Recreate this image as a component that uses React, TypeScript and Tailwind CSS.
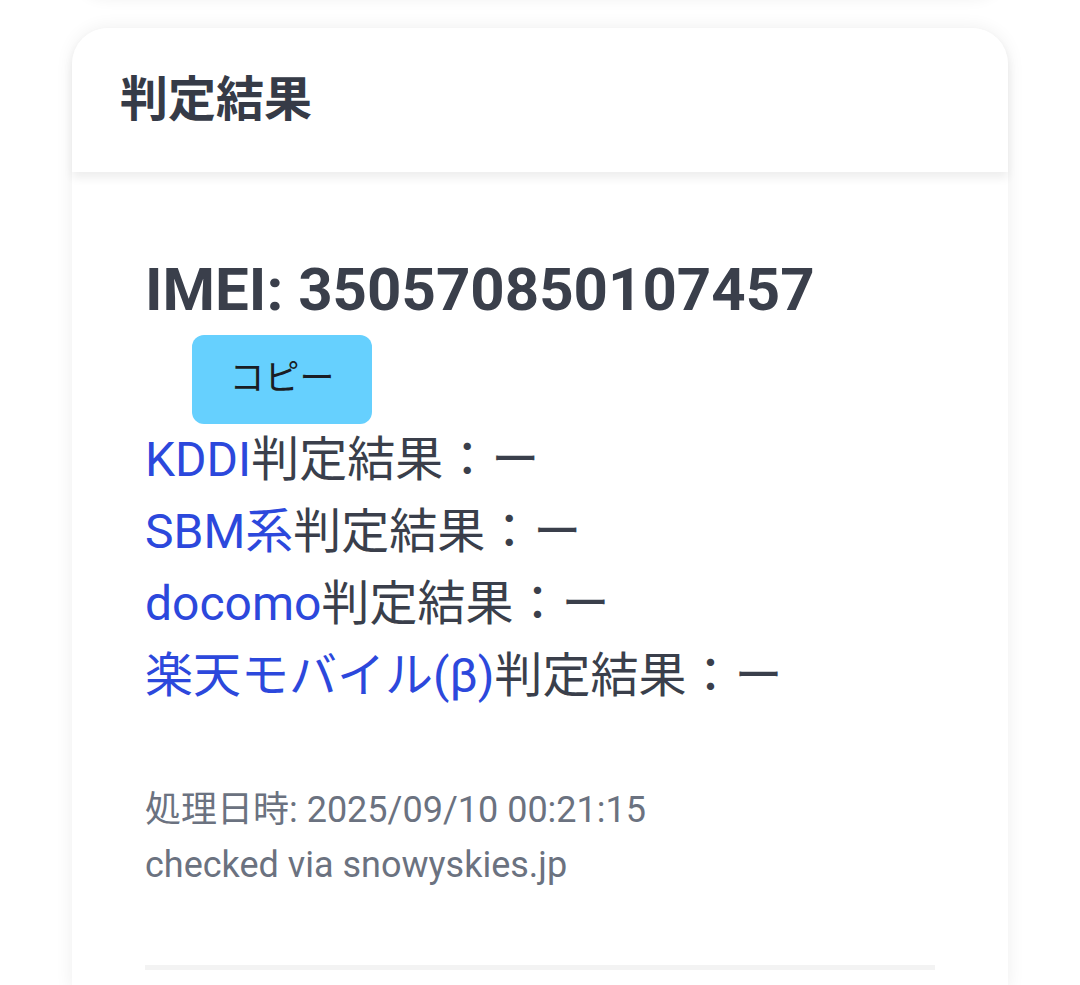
import React from 'react';

const font = { fontFamily: 'Roboto, "Noto Sans CJK JP", sans-serif' };

const carriers = ['KDDI', 'SBM系', 'docomo', '楽天モバイル(β)'];

export default function App() {
  return (
    <div className="min-h-screen bg-white overflow-hidden" style={font}>
      {/* previous card, only its bottom edge is visible */}
      <div className="mx-[72px] -mt-[40px] h-[36px] rounded-b-[36px] bg-white shadow-[0_4px_14px_rgba(0,0,0,0.05)]" />

      <div className="mx-[72px] mt-[32px] rounded-t-[36px] bg-white shadow-[0_0_18px_rgba(0,0,0,0.07)]">
        <div className="relative z-10 h-[144px] flex items-center px-[48px] rounded-t-[36px] bg-white shadow-[0_6px_10px_rgba(0,0,0,0.07)]">
          <h1 className="text-[48px] font-bold text-[#363b47] leading-none">判定結果</h1>
        </div>

        <div className="px-[73px] pt-[76px] pb-[20px]">
          <h2 className="text-[60px] leading-[84px] font-bold text-[#3a3f4b]">IMEI: 350570850107457</h2>
          <button className="mt-[3px] ml-[47px] w-[180px] h-[89px] rounded-[12px] bg-[#66d0fe] text-[35px] text-[#1a1d24]">
            コピー
          </button>

          <div className="text-[48px] leading-[72px] text-[#3a3f4b]">
            {carriers.map((c) => (
              <div key={c}>
                <span className="text-[#2c48dc]">{c}</span>判定結果：ー
              </div>
            ))}
          </div>

          <div className="mt-[71px] text-[36px] leading-[55px] text-[#6b7280]">
            <div>処理日時: 2025/09/10 00:21:15</div>
            <div>checked via snowyskies.jp</div>
          </div>

          <div className="mt-[72px] h-[5px] bg-[#f3f3f3]" />
        </div>
      </div>
    </div>
  );
}
